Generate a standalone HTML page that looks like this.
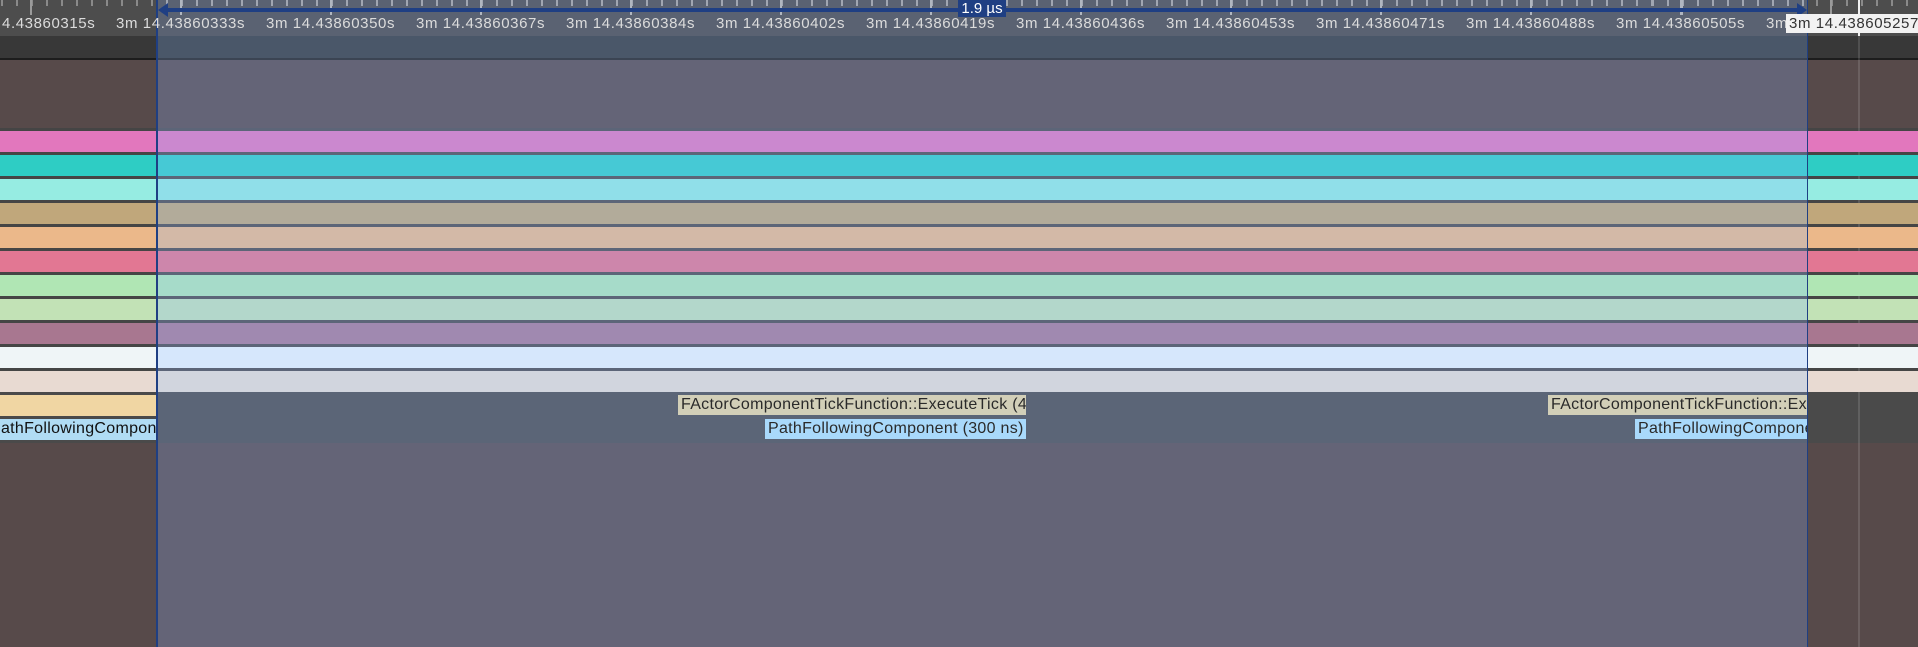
<!DOCTYPE html>
<html><head><meta charset="utf-8"><style>
*{margin:0;padding:0;box-sizing:border-box}
body{width:1918px;height:647px;overflow:hidden;background:#574a4a;font-family:"Liberation Sans",sans-serif;position:relative}
div{position:absolute}
.t{font-size:15px;letter-spacing:0.6px;color:#dcdcdc;top:15px;white-space:nowrap}
.r{height:21px}
.lbl{font-size:16px;letter-spacing:0.3px;line-height:20px;white-space:nowrap;overflow:hidden;padding-left:3px;color:#2a2a2a}
</style></head><body>
<div style="left:0;top:0;width:1918px;height:36px;background:#4d4d4d"></div>
<div style="left:0;top:0;width:1918px;height:6px;background:repeating-linear-gradient(90deg,#8a8a8a 0 2px,transparent 2px 15px);background-position:1px 0"></div>
<div style="left:0;top:0;width:1918px;height:15px;background:repeating-linear-gradient(90deg,#9a9a9a 0 2px,transparent 2px 150px);background-position:30px 0"></div>
<div style="left:0;top:36px;width:1918px;height:22px;background:#383838"></div>
<div style="left:0;top:58px;width:1918px;height:2px;background:#1d1d1d"></div>
<div style="left:0;top:128px;width:1918px;height:267px;background:#454545"></div>
<div style="left:0;top:392px;width:1918px;height:51px;background:#4a4a4a"></div>
<div style="left:1858px;top:0;width:2px;height:36px;background:#f0f0f0"></div>
<div style="left:1858px;top:36px;width:2px;height:611px;background:rgba(255,255,255,0.12)"></div>
<div class="r" style="left:0;top:131px;width:1918px;background:#e277bd"></div>
<div class="r" style="left:0;top:155px;width:1918px;background:#2ecdc4"></div>
<div class="r" style="left:0;top:179px;width:1918px;background:#96ece2"></div>
<div class="r" style="left:0;top:203px;width:1918px;background:#c0a77b"></div>
<div class="r" style="left:0;top:227px;width:1918px;background:#ebb88a"></div>
<div class="r" style="left:0;top:251px;width:1918px;background:#e27793"></div>
<div class="r" style="left:0;top:275px;width:1918px;background:#b0e6b4"></div>
<div class="r" style="left:0;top:299px;width:1918px;background:#c2e2b6"></div>
<div class="r" style="left:0;top:323px;width:1918px;background:#a87790"></div>
<div class="r" style="left:0;top:347px;width:1918px;background:#eff5f7"></div>
<div class="r" style="left:0;top:371px;width:1918px;background:#e8dad2"></div>
<div class="r" style="left:0;top:395px;width:157px;background:#f0d6a3"></div>
<div class="r lbl" style="left:0;top:419px;width:157px;background:#b0dcf4;padding-left:0;text-indent:-10px;color:#111">PathFollowingComponent (300 ns)</div>
<div style="left:157px;top:0;width:1651px;height:36px;background:#5a6272"></div>
<div style="left:157px;top:36px;width:1651px;height:22px;background:#4a5769"></div>
<div style="left:157px;top:58px;width:1651px;height:2px;background:#3b4453"></div>
<div style="left:157px;top:60px;width:1651px;height:587px;background:#646477"></div>
<div style="left:157px;top:128px;width:1651px;height:267px;background:#5c6578"></div>
<div style="left:157px;top:392px;width:1651px;height:51px;background:#5b6577"></div>
<div style="left:157px;top:0;width:1651px;height:6px;background:repeating-linear-gradient(90deg,#a0a6b2 0 2px,transparent 2px 15px);background-position:-156px 0"></div>
<div style="left:157px;top:0;width:1651px;height:15px;background:repeating-linear-gradient(90deg,#b0b6c0 0 2px,transparent 2px 150px);background-position:-127px 0"></div>
<div class="r" style="left:157px;top:131px;width:1651px;background:#cb88cf"></div>
<div class="r" style="left:157px;top:155px;width:1651px;background:#46c9d5"></div>
<div class="r" style="left:157px;top:179px;width:1651px;background:#90dfe9"></div>
<div class="r" style="left:157px;top:203px;width:1651px;background:#b2ab9a"></div>
<div class="r" style="left:157px;top:227px;width:1651px;background:#d3b9a7"></div>
<div class="r" style="left:157px;top:251px;width:1651px;background:#cd86ab"></div>
<div class="r" style="left:157px;top:275px;width:1651px;background:#a6dbc9"></div>
<div class="r" style="left:157px;top:299px;width:1651px;background:#b3d7cb"></div>
<div class="r" style="left:157px;top:323px;width:1651px;background:#a089b0"></div>
<div class="r" style="left:157px;top:347px;width:1651px;background:#d6e7fc"></div>
<div class="r" style="left:157px;top:371px;width:1651px;background:#d1d5de"></div>
<div class="lbl" style="left:678px;top:395px;width:348px;height:20px;background:#d2cfb8">FActorComponentTickFunction::ExecuteTick (400 ns)</div>
<div class="lbl" style="left:765px;top:419px;width:261px;height:20px;background:#a9d9fb">PathFollowingComponent (300 ns)</div>
<div class="lbl" style="left:1548px;top:395px;width:260px;height:20px;background:#d2cfb8">FActorComponentTickFunction::ExecuteTick (400 ns)</div>
<div class="lbl" style="left:1635px;top:419px;width:173px;height:20px;background:#a9d9fb">PathFollowingComponent (300 ns)</div>
<div style="left:156px;top:0;width:2px;height:647px;background:#1f3f83"></div>
<div style="left:1807px;top:0;width:1px;height:647px;background:#1f3f83"></div>
<div style="left:165px;top:8px;width:1634px;height:4px;background:#1f3f83"></div>
<div style="left:158px;top:3px;width:0;height:0;border-top:7px solid transparent;border-bottom:7px solid transparent;border-right:10px solid #1f3f83"></div>
<div style="left:1797px;top:3px;width:0;height:0;border-top:7px solid transparent;border-bottom:7px solid transparent;border-left:10px solid #1f3f83"></div>
<div style="left:958px;top:0;width:48px;height:17px;background:#1f3f83;color:#fff;font-size:15px;text-align:center;line-height:17px">1.9 µs</div>
<div class="t" style="left:2px">4.43860315s</div>
<div class="t" style="left:116px">3m 14.43860333s</div>
<div class="t" style="left:266px">3m 14.43860350s</div>
<div class="t" style="left:416px">3m 14.43860367s</div>
<div class="t" style="left:566px">3m 14.43860384s</div>
<div class="t" style="left:716px">3m 14.43860402s</div>
<div class="t" style="left:866px">3m 14.43860419s</div>
<div class="t" style="left:1016px">3m 14.43860436s</div>
<div class="t" style="left:1166px">3m 14.43860453s</div>
<div class="t" style="left:1316px">3m 14.43860471s</div>
<div class="t" style="left:1466px">3m 14.43860488s</div>
<div class="t" style="left:1616px">3m 14.43860505s</div>
<div class="t" style="left:1766px">3m</div>
<div style="left:1786px;top:14px;width:132px;height:19px;background:#f2f2f2;color:#333;font-size:15px;letter-spacing:0.6px;line-height:19px;padding-left:3px;white-space:nowrap;overflow:hidden">3m 14.438605257</div>
</body></html>
